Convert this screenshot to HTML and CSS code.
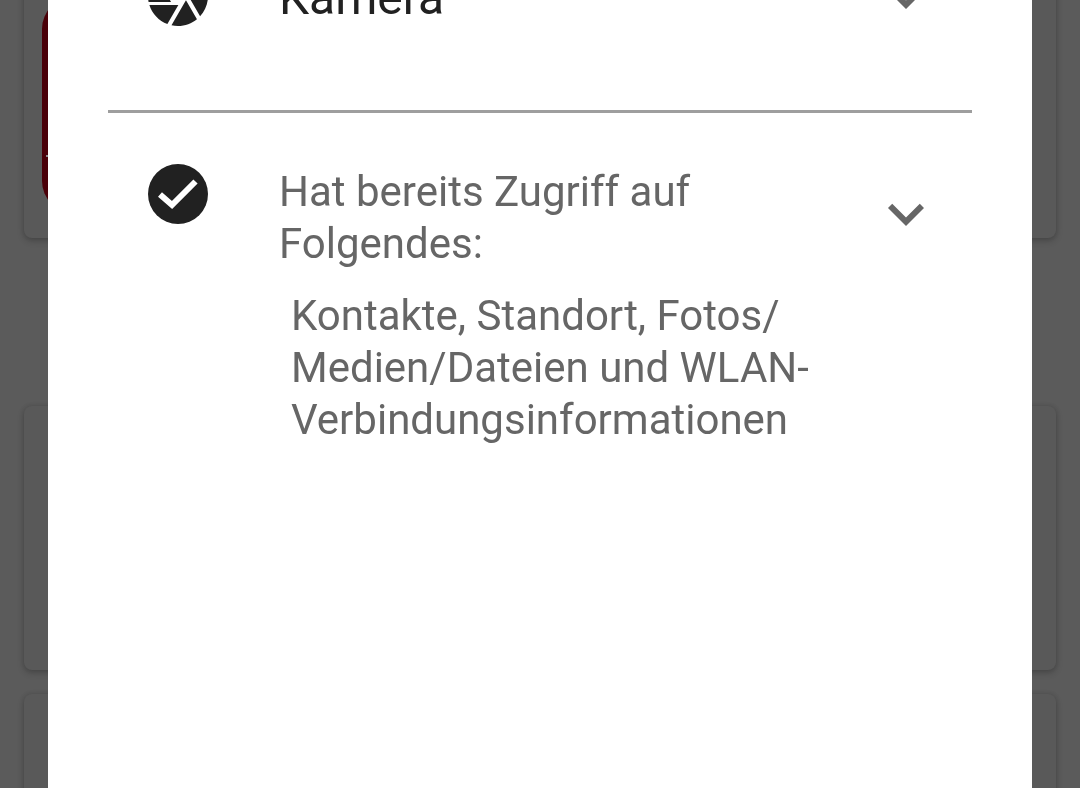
FILE: index.html
```html
<!DOCTYPE html>
<html lang="de">
<head>
<meta charset="utf-8">
<title>Berechtigungen</title>
<link rel="stylesheet" href="styles.css">
</head>
<body>
<div class="page">
  <div class="card card-a"><div class="app-logo"></div></div>
  <div class="card card-b"></div>
  <div class="card card-c"></div>
</div>
<section class="dialog">
  <div class="perm perm-top">
    <svg class="icon" viewBox="0 0 24 24"><path d="M9.4 10.5l4.77-8.26C13.47 2.09 12.75 2 12 2c-2.4 0-4.6.85-6.32 2.25l3.66 6.35.06-.1zM21.54 9c-.92-2.92-3.15-5.26-6-6.34L11.88 9h9.66zm.26 1h-7.49l.29.5 4.76 8.25C21 16.97 22 14.61 22 12c0-.69-.07-1.35-.2-2zM8.54 12l-3.9-6.75C3.01 7.03 2 9.39 2 12c0 .69.07 1.35.2 2h7.49l-1.15-2zm-6.08 3c.92 2.92 3.15 5.26 6 6.34L12.12 15H2.46zm11.27 0l-3.9 6.76c.7.15 1.42.24 2.17.24 2.4 0 4.6-.85 6.32-2.25l-3.66-6.35-.93 1.6z"/></svg>
    <div class="perm-body"><div class="perm-name">Kamera</div></div>
    <svg class="chevron chevron-top" viewBox="0 0 24 24"><path d="M16.59 8.59L12 13.17 7.41 8.59 6 10l6 6 6-6z"/></svg>
  </div>
  <div class="divider"></div>
  <div class="perm">
    <svg class="icon" viewBox="0 0 72 72"><circle cx="36" cy="36" r="30"/><path class="tick" d="M18 36.5L30 47 53.5 23.5"/></svg>
    <div class="perm-body">
      <div class="perm-title">Hat bereits Zugriff auf Folgendes:</div>
      <div class="perm-detail">Kontakte, Standort, Fotos/ Medien/Dateien und WLAN-Verbindungsinformationen</div>
    </div>
    <svg class="chevron" viewBox="0 0 24 24"><path d="M16.59 8.59L12 13.17 7.41 8.59 6 10l6 6 6-6z"/></svg>
  </div>
</section>
</body>
</html>
```
FILE: styles.css
```css
* { box-sizing: border-box; }
html, body { margin: 0; }
body {
  height: 788px;
  overflow: hidden;
  position: relative;
  background: #5b5b5b;
  font-family: Roboto, "Liberation Sans", sans-serif;
}
.page {
  display: flex;
  flex-direction: column;
  height: 788px;
  padding: 0 24px;
  overflow: hidden;
}
.card {
  flex: none;
  background: #595959;
  border-radius: 8px;
  box-shadow: 0 3px 7px rgba(0, 0, 0, 0.2), 0 0 5px rgba(0, 0, 0, 0.12);
}
.card-a { height: 338px; margin-top: -100px; padding: 97px 0 0 18px; }
.card-b { height: 264px; margin-top: 168px; }
.card-c { height: 220px; margin-top: 24px; }
.app-logo {
  position: relative;
  width: 200px;
  height: 216px;
  border-radius: 32px;
  background: #4a0008;
}
.app-logo::after {
  content: "";
  position: absolute;
  left: 4px;
  top: 158px;
  width: 4px;
  height: 2px;
  background: #8a8a8a;
}
.dialog {
  position: absolute;
  top: 0;
  left: 48px;
  width: 984px;
  height: 788px;
  overflow: hidden;
  background: #fff;
  padding: 0 60px;
}
.perm {
  display: flex;
  align-items: flex-start;
  padding: 0 30px 0 34px;
}
.perm-top { height: 72px; margin-top: -40px; }
.icon {
  flex: none;
  width: 72px;
  height: 72px;
  fill: #212121;
}
.tick {
  fill: none;
  stroke: #fff;
  stroke-width: 6;
}
.perm-body {
  flex: 1;
  margin-left: 65px;
  padding-top: 8px;
  font-size: 42px;
  line-height: 52px;
  will-change: opacity;
}
.perm-top .perm-body { padding-top: 12px; }
.perm-name { color: #212121; font-size: 48px; }
.perm-title { color: #666; width: 480px; }
.perm-detail { color: #666; margin-top: 20px; padding-left: 12px; }
.chevron {
  flex: none;
  width: 72px;
  height: 72px;
  margin-top: 20px;
  fill: #666;
}
.chevron-top { margin-top: 1px; }
.divider {
  height: 3px;
  margin-top: 78px;
  margin-bottom: 45px;
  background: #9e9e9e;
}
```
